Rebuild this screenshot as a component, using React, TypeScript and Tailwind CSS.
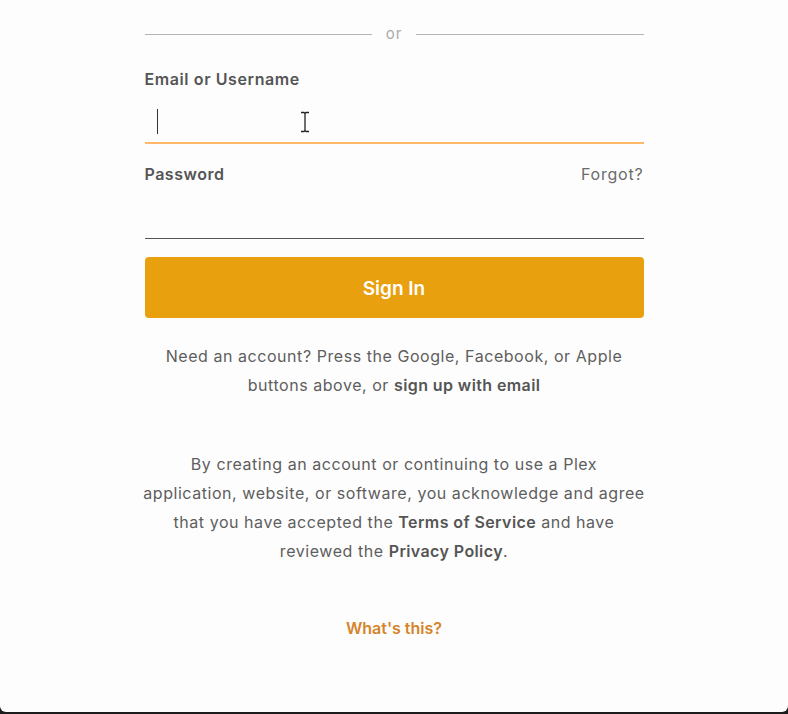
import React from 'react';

// text I-beam mouse pointer hovering over the email field
function IBeam() {
  return (
    <svg width="10" height="22" viewBox="0 0 10 22" className="absolute left-[300px] top-[111px]">
      <path d="M1 1.5h3l1 1 1-1h3M5 2.5v17M1 20.5h3l1-1 1 1h3" fill="none" stroke="#fff" strokeWidth="3" />
      <path d="M1 1.5h3l1 1 1-1h3M5 2.5v17M1 20.5h3l1-1 1 1h3" fill="none" stroke="#222" strokeWidth="1.3" />
    </svg>
  );
}

export default function App() {
  return (
    <div className="h-[714px] w-full bg-[#1c1c1c] font-['Inter',sans-serif]">
      <div className="relative h-[712px] rounded-b-[6px] bg-[#fdfdfd] flex justify-center">
        <div className="w-[499px]">
          {/* or divider */}
          <div className="mt-[24px] h-5 flex items-center">
            <div className="flex-1 h-px bg-[#b5b5b5]" />
            <span className="px-[14px] text-[15px] leading-5 tracking-[1px] text-[#ababab]">or</span>
            <div className="flex-1 h-px bg-[#b5b5b5]" />
          </div>

          {/* email */}
          <label className="mt-[23px] block text-[16px] leading-6 font-semibold tracking-[0.6px] text-[#555]">Email or Username</label>
          <div className="h-[51px] flex items-center pl-3 pt-[9px]">
            <span className="block w-px h-[25px] bg-[#333]" />
          </div>
          <div className="h-[2px] bg-orange-300" />

          {/* password */}
          <div className="mt-[18px] flex items-center justify-between leading-6">
            <label className="text-[16px] font-semibold tracking-[0.5px] text-[#555]">Password</label>
            <span className="text-[16px] tracking-[0.8px] text-[#6b6b6b]">Forgot?</span>
          </div>
          <div className="h-[52px]" />
          <div className="h-px bg-[#555]" />

          <button className="mt-[18px] w-full h-[61px] rounded-[4px] bg-[#e8a00f] text-white text-[19px] font-semibold pt-1">
            Sign In
          </button>

          <p className="-mx-4 mt-[24px] text-center text-[16px] leading-[29px] tracking-[0.55px] text-[#5e5e5e]">
            Need an account? Press the Google, Facebook, or Apple
            <br />
            buttons above, or <span className="font-semibold tracking-[0.4px] text-[#555]">sign up with email</span>
          </p>

          <p className="-mx-4 mt-[50px] text-center text-[16px] leading-[29px] tracking-[0.55px] text-[#5e5e5e]">
            By creating an account or continuing to use a Plex
            <br />
            application, website, or software, you acknowledge and agree
            <br />
            that you have accepted the <span className="font-semibold tracking-[0.4px] text-[#555]">Terms of Service</span> and have
            <br />
            reviewed the <span className="font-semibold tracking-[0.4px] text-[#555]">Privacy Policy</span>.
          </p>

          <p className="mt-[50px] text-center text-[16px] leading-6 font-semibold text-[#d4842a]">What's this?</p>
        </div>
        <IBeam />
      </div>
    </div>
  );
}
